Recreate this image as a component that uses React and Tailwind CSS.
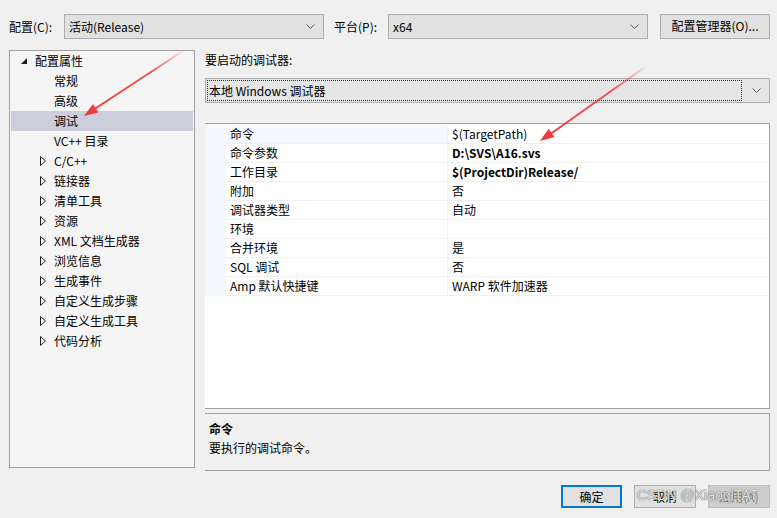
import React from 'react';

const TREE = [
  { label: '配置属性', level: 0, expanded: true },
  { label: '常规', level: 1 },
  { label: '高级', level: 1 },
  { label: '调试', level: 1, selected: true },
  { label: 'VC++ 目录', level: 1 },
  { label: 'C/C++', level: 1, collapsed: true },
  { label: '链接器', level: 1, collapsed: true },
  { label: '清单工具', level: 1, collapsed: true },
  { label: '资源', level: 1, collapsed: true },
  { label: 'XML 文档生成器', level: 1, collapsed: true },
  { label: '浏览信息', level: 1, collapsed: true },
  { label: '生成事件', level: 1, collapsed: true },
  { label: '自定义生成步骤', level: 1, collapsed: true },
  { label: '自定义生成工具', level: 1, collapsed: true },
  { label: '代码分析', level: 1, collapsed: true },
];

const PROPS = [
  { name: '命令', value: '$(TargetPath)', active: true },
  { name: '命令参数', value: 'D:\\SVS\\A16.svs', bold: true },
  { name: '工作目录', value: '$(ProjectDir)Release/', bold: true },
  { name: '附加', value: '否' },
  { name: '调试器类型', value: '自动' },
  { name: '环境', value: '' },
  { name: '合并环境', value: '是' },
  { name: 'SQL 调试', value: '否' },
  { name: 'Amp 默认快捷键', value: 'WARP 软件加速器' },
];

const Chevron = () => (
  <svg width="9" height="5" viewBox="0 0 9 5" className="shrink-0">
    <path d="M0.5 0.5 L4.5 4.5 L8.5 0.5" fill="none" stroke="#606060" strokeWidth="1" />
  </svg>
);

const Combo = ({ text, className }) => (
  <div className={`h-[25px] flex items-center justify-between pl-[4px] pr-[8px] bg-[#e1e1e1] border border-[#adadad] ${className}`}>
    <span>{text}</span>
    <Chevron />
  </div>
);

const Arrows = () => (
  <svg className="absolute inset-0 pointer-events-none" width="777" height="518">
    <defs>
      <linearGradient id="g1" gradientUnits="userSpaceOnUse" x1="186" y1="49" x2="90" y2="112">
        <stop offset="0" stopColor="#ef3b3b" stopOpacity="0" />
        <stop offset="0.35" stopColor="#ef3b3b" stopOpacity="0.85" />
        <stop offset="1" stopColor="#ef3b3b" stopOpacity="1" />
      </linearGradient>
      <linearGradient id="g2" gradientUnits="userSpaceOnUse" x1="648" y1="65" x2="546" y2="137">
        <stop offset="0" stopColor="#ef3b3b" stopOpacity="0" />
        <stop offset="0.35" stopColor="#ef3b3b" stopOpacity="0.85" />
        <stop offset="1" stopColor="#ef3b3b" stopOpacity="1" />
      </linearGradient>
    </defs>
    <line x1="186" y1="49" x2="93" y2="110" stroke="url(#g1)" strokeWidth="2" />
    <polygon points="84,116 98.4,112.5 93,104.1" fill="#ef3b3b" />
    <line x1="648" y1="65" x2="549" y2="135" stroke="url(#g2)" strokeWidth="2" />
    <polygon points="540,141 554.4,137 548.6,128.8" fill="#ef3b3b" />
  </svg>
);

export default function App() {
  return (
    <div className="relative w-[777px] h-[518px] overflow-hidden bg-[#f0f0f0] text-[12px] text-black font-['Noto_Sans_CJK_SC',sans-serif] leading-none">
      {/* 顶部配置行 */}
      <div className="flex items-center h-[25px] mt-[14px] pl-[9px]">
        <span className="w-[55px]">配置(C):</span>
        <Combo text="活动(Release)" className="w-[260px]" />
        <span className="ml-[10px] w-[54px]">平台(P):</span>
        <Combo text="x64" className="w-[260px]" />
        <div className="ml-[12px] -mt-[1px] w-[110px] h-[25px] flex items-center justify-center bg-[#e1e1e1] border border-[#adadad]">
          配置管理器(O)...
        </div>
      </div>

      <div className="flex mt-[11px] pl-[9px]">
        {/* 左侧树 */}
        <div className="w-[186px] h-[418px] bg-[#f5f5f5] border border-[#a0a0a0] p-[1px] pt-[0px]">
          {TREE.map((it, i) => (
            <div
              key={i}
              className={`relative h-[20px] flex items-center ${it.selected ? 'bg-[#cccedb]' : ''} ${it.level === 0 ? 'pl-[24px]' : 'pl-[43px]'}`}
            >
              {it.expanded && (
                <svg width="7" height="7" viewBox="0 0 7 7" className="absolute left-[10px] top-[7px]">
                  <polygon points="6,0 6,6 0,6" fill="#1e1e1e" />
                </svg>
              )}
              {it.collapsed && (
                <svg width="6" height="10" viewBox="0 0 6 10" className="absolute left-[29px] top-[5px]">
                  <polygon points="0.5,0.5 5.5,5 0.5,9.5" fill="none" stroke="#1e1e1e" strokeWidth="1" />
                </svg>
              )}
              <span>{it.label}</span>
            </div>
          ))}
        </div>

        {/* 右侧 */}
        <div className="ml-[10px] w-[565px] flex flex-col">
          <div className="h-[20px] flex items-center">要启动的调试器:</div>
          <div className="mt-[8px] h-[25px] bg-[#e5e5e5] border border-[#adadad] p-[1px] pr-[8px] flex items-center">
            <div className="flex-1 h-full border border-dotted border-[#303030] flex items-center pl-[1px] mr-[10px]">
              本地 Windows 调试器
            </div>
            <Chevron />
          </div>

          {/* 属性网格 */}
          <div className="mt-[20px] h-[286px] bg-white border-t border-r border-b border-[#a0a0a0]">
            {PROPS.map((p, i) => (
              <div key={i} className="flex h-[19px] first:mt-[1px]">
                <div className="w-[21px] bg-[#f4f7fc]" />
                <div className={`w-[221px] flex items-center pl-[4px] border-b border-[#f0f0f0] ${p.active ? 'bg-[#f4f7fc]' : ''}`}>
                  {p.name}
                </div>
                <div className={`flex-1 flex items-center pl-[4px] border-l border-b border-[#f0f0f0] ${p.bold ? 'font-bold' : ''}`}>
                  {p.value}
                </div>
              </div>
            ))}
          </div>

          {/* 说明 */}
          <div className="mt-[4px] h-[58px] border-t border-r border-b border-[#a0a0a0] pl-[4px] pt-[6px]">
            <div className="font-bold h-[18px] flex items-center">命令</div>
            <div className="h-[18px] flex items-center mt-[1px]">要执行的调试命令。</div>
          </div>
        </div>
      </div>

      {/* 底部按钮 */}
      <div className="flex justify-end gap-[12px] pr-[7px] mt-[14px]">
        <div className="w-[61px] h-[23px] flex items-center justify-center bg-[#e1e1e1] border-2 border-[#0078d7]">确定</div>
        <div className="w-[62px] h-[23px] flex items-center justify-center bg-[#e1e1e1] border border-[#adadad]">取消</div>
        <div className="w-[62px] h-[23px] flex items-center justify-center bg-[#cccccc] border border-[#bfbfbf] text-[#838383]">应用(A)</div>
      </div>

      {/* 水印 */}
      <span className="absolute left-[637px] top-[488px] whitespace-nowrap text-[14px] leading-none text-[#f2f2f2]/90 font-['Liberation_Sans',sans-serif] pointer-events-none [text-shadow:0_0_1px_#555,0_0_1px_#777]">
        CSDN @XiaoqiTAT
      </span>

      <Arrows />
    </div>
  );
}
